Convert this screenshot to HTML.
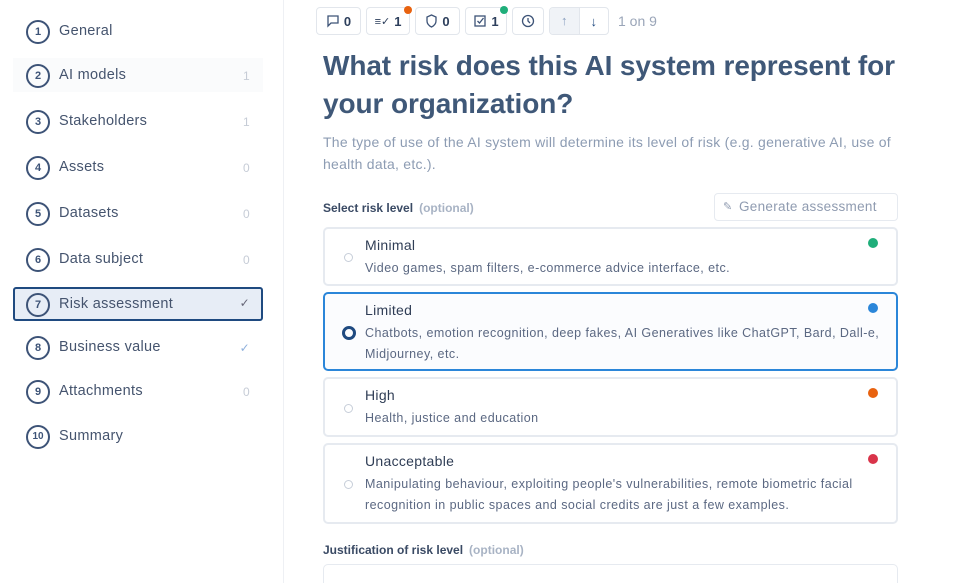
<!DOCTYPE html><html><head><style>
html,body{margin:0;width:963px;height:583px;overflow:hidden}
body{background:#fff;font-family:"Liberation Sans",sans-serif;color:#3f5170;position:relative}
.side{position:absolute;left:0;top:0;width:283px;height:583px;border-right:1px solid #eef0f4}
.it{position:absolute;left:13px;width:250px;height:34px;box-sizing:border-box;font-size:14.5px;color:#45546e;letter-spacing:0.3px}
.it .c{position:absolute;left:13px;top:6px;width:20px;height:20px;border:2px solid #3d5377;border-radius:50%;font-size:11px;font-weight:bold;text-align:center;line-height:20px;color:#3d5377;letter-spacing:0}
.it .t{position:absolute;left:46px;top:9px}
.it .n{position:absolute;right:13px;top:11px;font-size:12px;color:#c6ccd6}
.act{border:2px solid #1f4a80;border-radius:3px;background:#e7edf6}
.btn{position:absolute;top:7px;height:28px;border:1px solid #e2e6ec;border-radius:4px;box-sizing:border-box;font-size:13px;font-weight:bold;color:#2d3f5c;display:flex;align-items:center;justify-content:center;gap:4px}
.dot{position:absolute;width:8px;height:8px;border-radius:50%}
h1{position:absolute;left:323px;top:47px;margin:0;font-size:28px;line-height:38px;color:#3f5878;width:590px;font-weight:bold;letter-spacing:-0.1px}
.desc{position:absolute;left:323px;top:131px;width:590px;font-size:14px;line-height:22px;color:#8d9cb3;letter-spacing:0.25px}
.lab{position:absolute;left:323px;font-size:12px;font-weight:bold;color:#3a4a64}
.lab span{color:#a8b3c4;margin-left:6px}
.card{position:absolute;left:323px;width:575px;box-sizing:border-box;border:2px solid #e6eaf0;border-radius:5px}
.card .h{position:absolute;left:40px;top:8px;font-size:14px;color:#2f3d55;letter-spacing:0.3px}
.card .d{position:absolute;left:40px;top:29px;font-size:12.5px;line-height:20.5px;color:#5b6882;width:525px;letter-spacing:0.45px}
.card .r{position:absolute;left:19px;width:7px;height:7px;border:1.5px solid #c7ced9;border-radius:50%}
.card .dt{position:absolute;right:18px;top:9px;width:10px;height:10px;border-radius:50%}
</style></head><body>
<div class="side">
<div class="it" style="top:14px"><div class="c">1</div><div class="t">General</div></div>
<div class="it" style="top:58px;background:#fafbfc"><div class="c">2</div><div class="t">AI models</div><div class="n">1</div></div>
<div class="it" style="top:104px"><div class="c">3</div><div class="t">Stakeholders</div><div class="n">1</div></div>
<div class="it" style="top:150px"><div class="c">4</div><div class="t">Assets</div><div class="n">0</div></div>
<div class="it" style="top:196px"><div class="c">5</div><div class="t">Datasets</div><div class="n">0</div></div>
<div class="it" style="top:242px"><div class="c">6</div><div class="t">Data subject</div><div class="n">0</div></div>
<div class="it act" style="top:287px"><div class="c" style="left:11px;top:4px">7</div><div class="t" style="left:44px;top:7px">Risk assessment</div><div class="n" style="right:11px;top:7px;color:#667">✓</div></div>
<div class="it" style="top:330px"><div class="c">8</div><div class="t">Business value</div><div class="n" style="color:#8fb0dc">✓</div></div>
<div class="it" style="top:374px"><div class="c">9</div><div class="t">Attachments</div><div class="n">0</div></div>
<div class="it" style="top:419px"><div class="c" style="font-size:10px">10</div><div class="t">Summary</div></div>
</div>
<div class="btn" style="left:316px;width:45px"><svg width="14" height="14" viewBox="0 0 14 14"><path d="M2 2h10v7H5l-3 3z" fill="none" stroke="#3d5377" stroke-width="1.3"/></svg>0</div>
<div class="btn" style="left:366px;width:44px"><span style="font-size:11px;font-weight:normal">≡✓</span>1</div>
<div class="dot" style="left:404px;top:6px;background:#e8620f"></div>
<div class="btn" style="left:415px;width:45px"><svg width="13" height="14" viewBox="0 0 13 14"><path d="M6.5 1L2 3v4c0 3 2.5 5 4.5 6 2-1 4.5-3 4.5-6V3z" fill="none" stroke="#3d5377" stroke-width="1.3"/></svg>0</div>
<div class="btn" style="left:465px;width:42px"><svg width="14" height="14" viewBox="0 0 14 14"><rect x="2" y="2" width="10" height="10" fill="none" stroke="#3d5377" stroke-width="1.3"/><path d="M4.5 7l2 2 4-5" fill="none" stroke="#3d5377" stroke-width="1.3"/></svg>1</div>
<div class="dot" style="left:500px;top:6px;background:#1fae7a"></div>
<div class="btn" style="left:512px;width:32px"><svg width="14" height="14" viewBox="0 0 14 14"><circle cx="7" cy="7" r="5.5" fill="none" stroke="#3d5377" stroke-width="1.3"/><path d="M7 4v3l2 2" fill="none" stroke="#3d5377" stroke-width="1.3"/></svg></div>
<div class="btn" style="left:549px;width:60px;justify-content:flex-start;gap:0;overflow:hidden"><div style="width:29px;height:26px;background:#f0f3f7;color:#8aa0c0;text-align:center;line-height:26px;border-right:1px solid #e2e6ec">↑</div><div style="width:29px;text-align:center;color:#1f4a80">↓</div></div>
<div style="position:absolute;left:618px;top:13px;font-size:14px;color:#9aa5b8">1 on 9</div>
<h1>What risk does this AI system represent for your organization?</h1>
<div class="desc">The type of use of the AI system will determine its level of risk (e.g. generative AI, use of health data, etc.).</div>
<div class="lab" style="top:201px">Select risk level<span>(optional)</span></div>
<div style="position:absolute;left:714px;top:193px;width:184px;height:28px;border:1px solid #e6eaf0;border-radius:4px;box-sizing:border-box;font-size:13.5px;color:#8f9bb0;line-height:26px;padding-left:24px;letter-spacing:0.3px">Generate assessment<span style="position:absolute;left:8px;top:0;font-size:11px">✎</span></div>
<div class="card" style="top:227px;height:59px"><div class="h">Minimal</div><div class="d">Video games, spam filters, e-commerce advice interface, etc.</div><div class="r" style="top:24px"></div><div class="dt" style="background:#1fae7a"></div></div>
<div class="card" style="top:292px;height:79px;border-color:#2b86d9;background:#fbfcfe"><div class="h">Limited</div><div class="d">Chatbots, emotion recognition, deep fakes, AI Generatives like ChatGPT, Bard, Dall-e, Midjourney, etc.</div><div class="r" style="top:32px;left:17px;width:8px;height:8px;border:3px solid #1f4a80"></div><div class="dt" style="background:#2b86d9"></div></div>
<div class="card" style="top:377px;height:60px"><div class="h">High</div><div class="d">Health, justice and education</div><div class="r" style="top:25px"></div><div class="dt" style="background:#e8620f"></div></div>
<div class="card" style="top:443px;height:81px"><div class="h">Unacceptable</div><div class="d">Manipulating behaviour, exploiting people's vulnerabilities, remote biometric facial recognition in public spaces and social credits are just a few examples.</div><div class="r" style="top:35px"></div><div class="dt" style="background:#d9344a"></div></div>
<div class="lab" style="top:543px">Justification of risk level<span>(optional)</span></div>
<div class="card" style="top:564px;height:40px;border-width:1px"></div>
</body></html>
